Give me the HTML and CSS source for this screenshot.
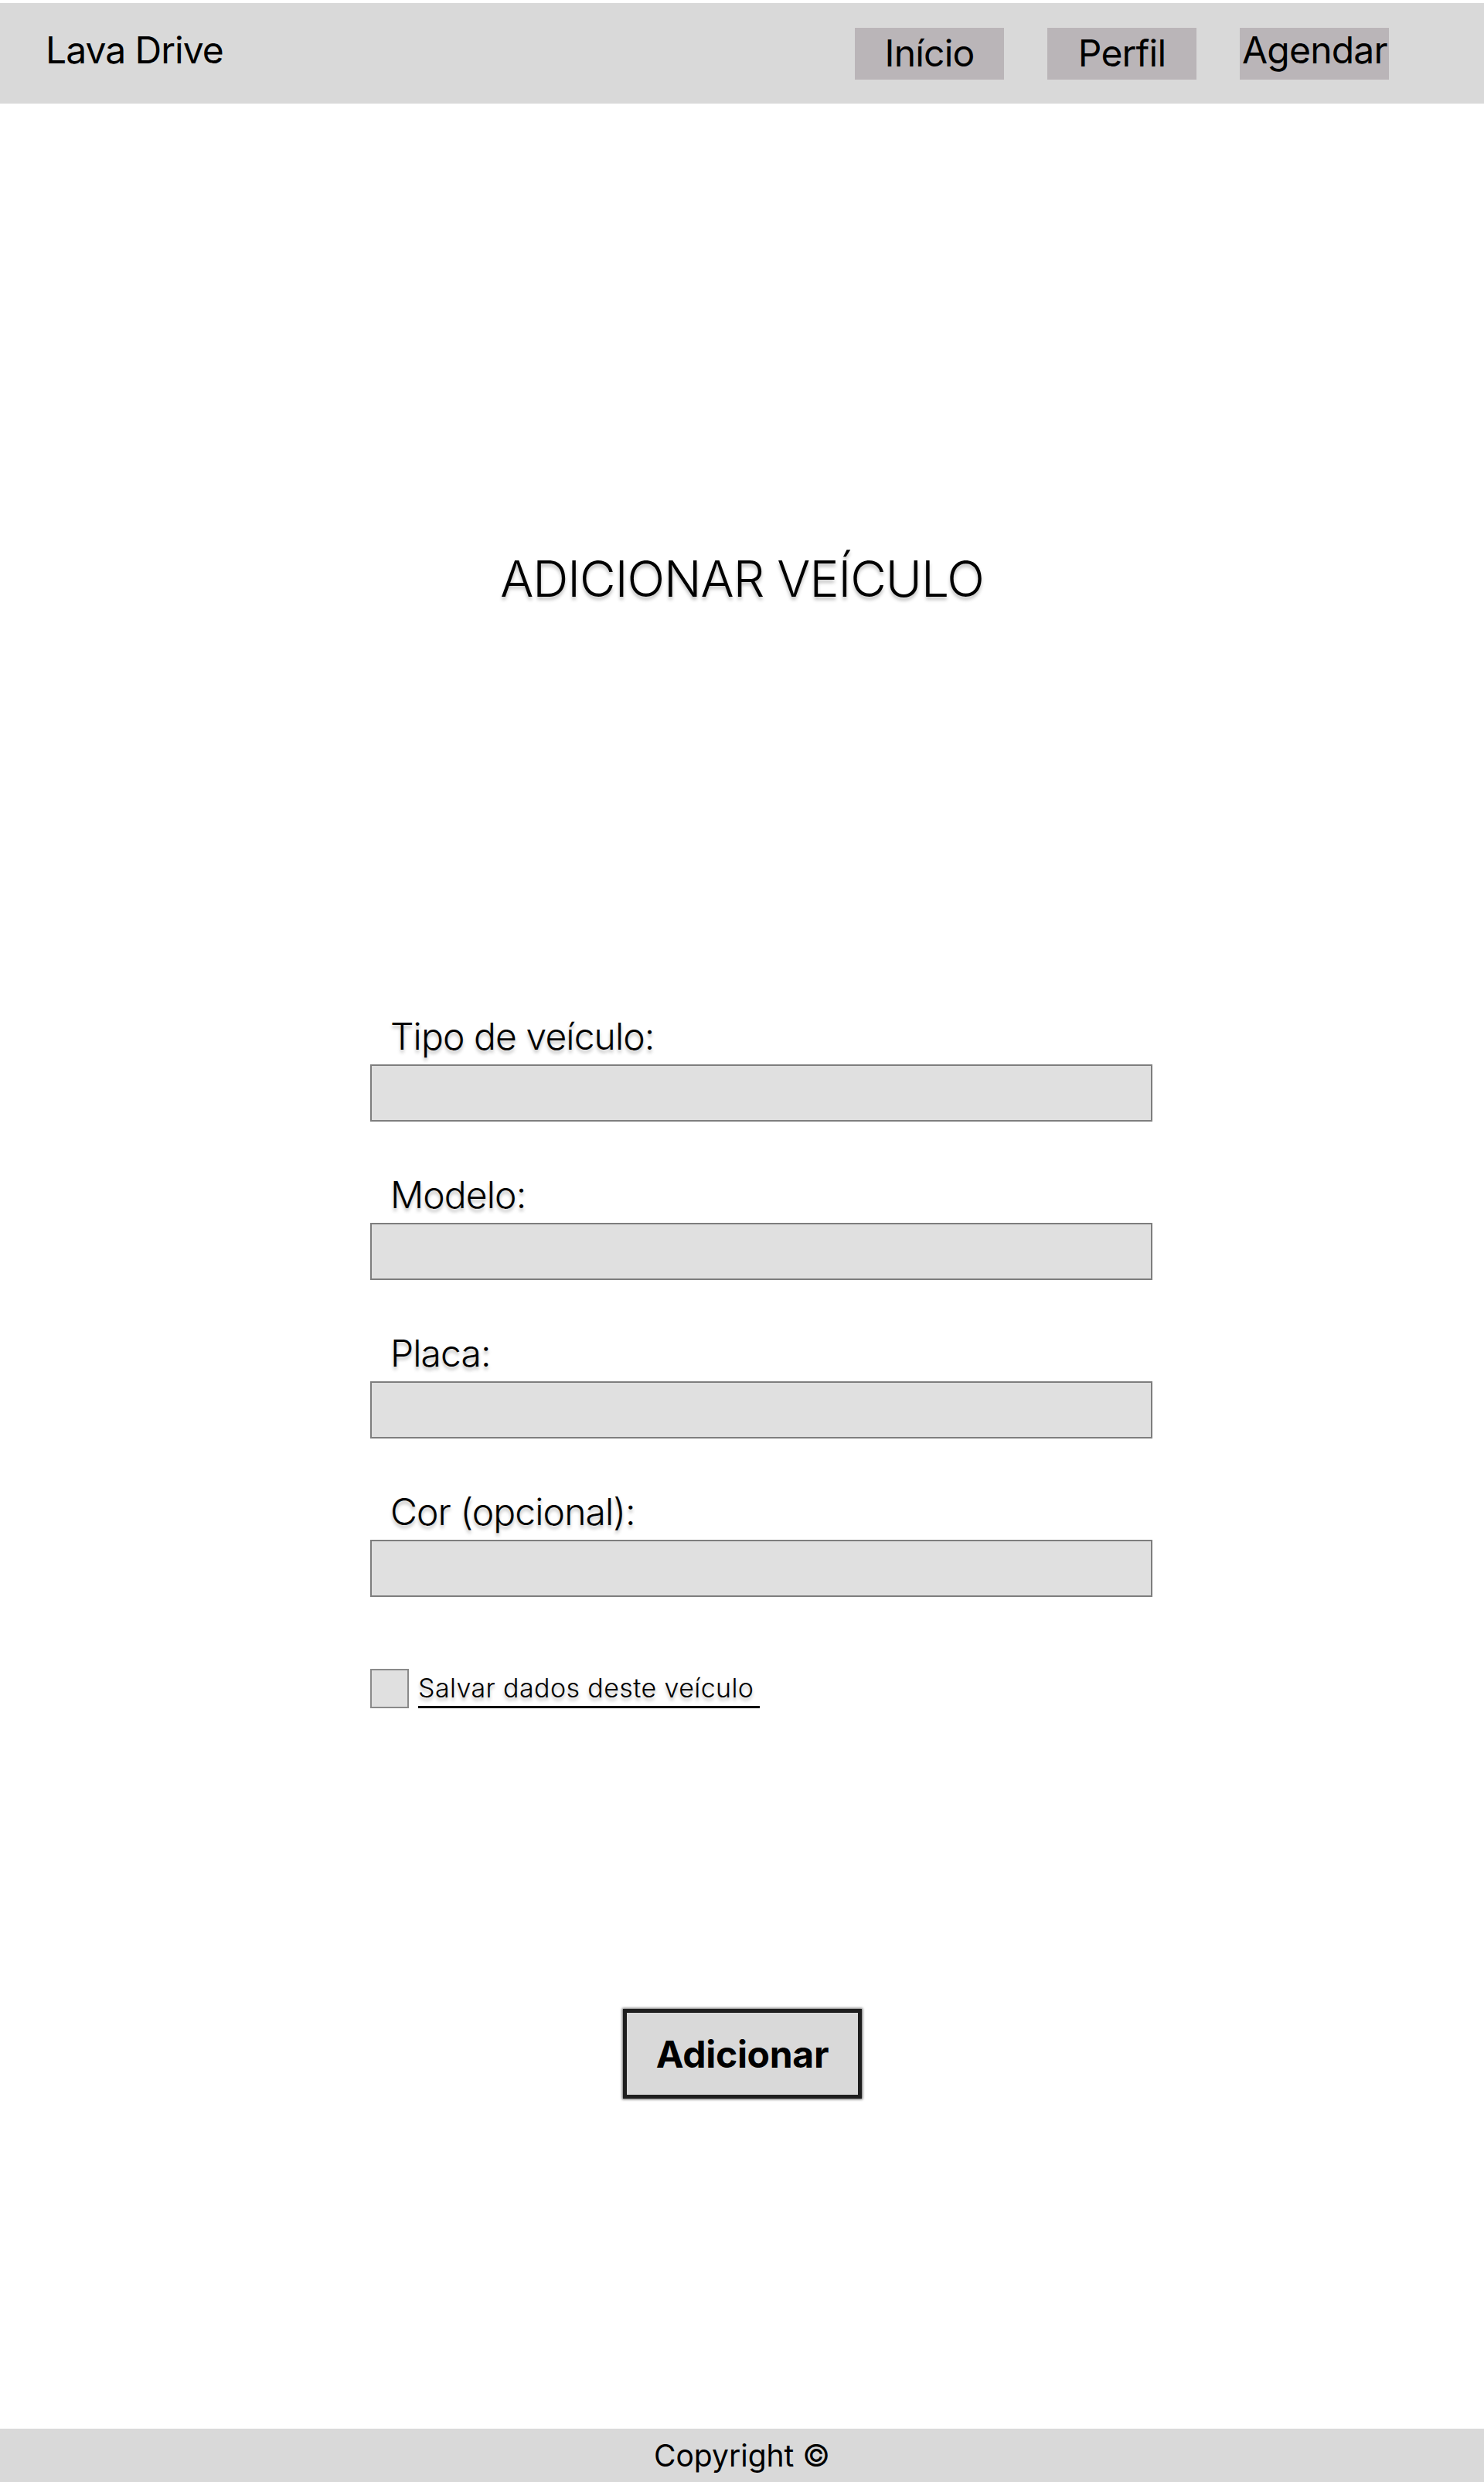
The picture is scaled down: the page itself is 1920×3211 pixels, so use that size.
FILE: index.html
```html
<!DOCTYPE html>
<html lang="pt-BR">
<head>
<meta charset="utf-8">
<title>Lava Drive - Adicionar veículo</title>
<link rel="stylesheet" href="styles.css">
</head>
<body>
<div class="page">
  <header class="topbar">
    <div class="brand">Lava Drive</div>
    <nav class="nav">
      <a class="nav-item">Início</a>
      <a class="nav-item">Perfil</a>
      <a class="nav-item nav-item--raised">Agendar</a>
    </nav>
  </header>

  <main class="content">
    <h1 class="title">ADICIONAR VEÍCULO</h1>

    <form class="form">
      <div class="fields">
        <div class="field">
          <label class="field-label">Tipo de veículo:</label>
          <div class="field-input"></div>
        </div>
        <div class="field">
          <label class="field-label">Modelo:</label>
          <div class="field-input"></div>
        </div>
        <div class="field">
          <label class="field-label">Placa:</label>
          <div class="field-input"></div>
        </div>
        <div class="field">
          <label class="field-label">Cor (opcional):</label>
          <div class="field-input"></div>
        </div>
      </div>

      <div class="save-row">
        <span class="checkbox"></span>
        <span class="save-text">Salvar dados deste veículo</span>
      </div>
    </form>

    <div class="actions">
      <button class="btn-add" type="button">Adicionar</button>
    </div>
  </main>

  <footer class="footer">Copyright ©</footer>
</div>
</body>
</html>
```

FILE: styles.css
```css
* {
  box-sizing: border-box;
}

html, body {
  margin: 0;
  padding: 0;
  background: #ffffff;
}

body {
  font-family: Inter, "Noto Sans", "Liberation Sans", sans-serif;
  color: #000000;
}

.page {
  min-height: 3211px;
  display: flex;
  flex-direction: column;
}

/* Header */
.topbar {
  margin-top: 4px;
  height: 130px;
  background: #d9d9d9;
  display: flex;
  align-items: center;
  padding-left: 59px;
  padding-right: 123px;
}

.brand {
  font-size: 48px;
  line-height: 58px;
  font-weight: 400;
  letter-spacing: -1px;
  padding-bottom: 9px;
}

.nav {
  margin-left: auto;
  display: flex;
  gap: 56px;
}

.nav-item {
  width: 193px;
  height: 67px;
  background: #bab5b8;
  display: flex;
  align-items: center;
  justify-content: center;
  font-size: 48px;
  line-height: 58px;
  letter-spacing: -0.8px;
  color: #000;
  text-decoration: none;
}

.nav-item--raised {
  justify-content: flex-start;
  padding-left: 3px;
  padding-bottom: 9px;
  white-space: nowrap;
  overflow: visible;
}

/* Main */
.content {
  display: flex;
  flex-direction: column;
  padding-top: 576px;
}

.title {
  margin: 0;
  text-align: center;
  font-size: 64px;
  line-height: 77px;
  font-weight: 300;
  letter-spacing: -1px;
  text-shadow: 0 4px 4px rgba(0, 0, 0, 0.25);
}

.form {
  margin-top: 525px;
  margin-left: 479px;
  width: 1012px;
}

.fields {
  display: flex;
  flex-direction: column;
  gap: 66px;
}

.field {
  display: flex;
  flex-direction: column;
}

.field-label {
  font-size: 48px;
  line-height: 58px;
  font-weight: 300;
  letter-spacing: -0.9px;
  padding-left: 26px;
  margin-bottom: 7px;
  text-shadow: 0 4px 4px rgba(0, 0, 0, 0.25);
}

.field-input {
  height: 74px;
  background: #e0e0e0;
  border: 2px solid #7e7e7e;
}

.save-row {
  margin-top: 93px;
  display: flex;
  align-items: flex-end;
  gap: 12px;
}

.checkbox {
  width: 50px;
  height: 51px;
  background: #e0e0e0;
  border: 2px solid #8a8a8a;
}

.save-text {
  font-size: 34px;
  line-height: 39px;
  font-weight: 300;
  letter-spacing: 0.4px;
  padding-right: 8px;
  padding-bottom: 4px;
  border-bottom: 3px solid #000;
  text-shadow: 0 4px 4px rgba(0, 0, 0, 0.25);
}

.actions {
  margin-top: 389px;
  display: flex;
  justify-content: center;
}

.btn-add {
  width: 309px;
  height: 116px;
  background: #d9d9d9;
  border: 5px solid #1e1e1e;
  box-shadow: 0 0 3px 1px rgba(0, 0, 0, 0.6);
  font-family: Inter, "Noto Sans", "Liberation Sans", sans-serif;
  font-size: 48px;
  font-weight: 700;
  letter-spacing: -0.3px;
  color: #000;
  padding: 0;
  margin-left: 1px;
}

/* Footer */
.footer {
  margin-top: auto;
  height: 69px;
  background: #d9d9d9;
  display: flex;
  align-items: center;
  justify-content: center;
  font-size: 39px;
  font-weight: 400;
}
```
